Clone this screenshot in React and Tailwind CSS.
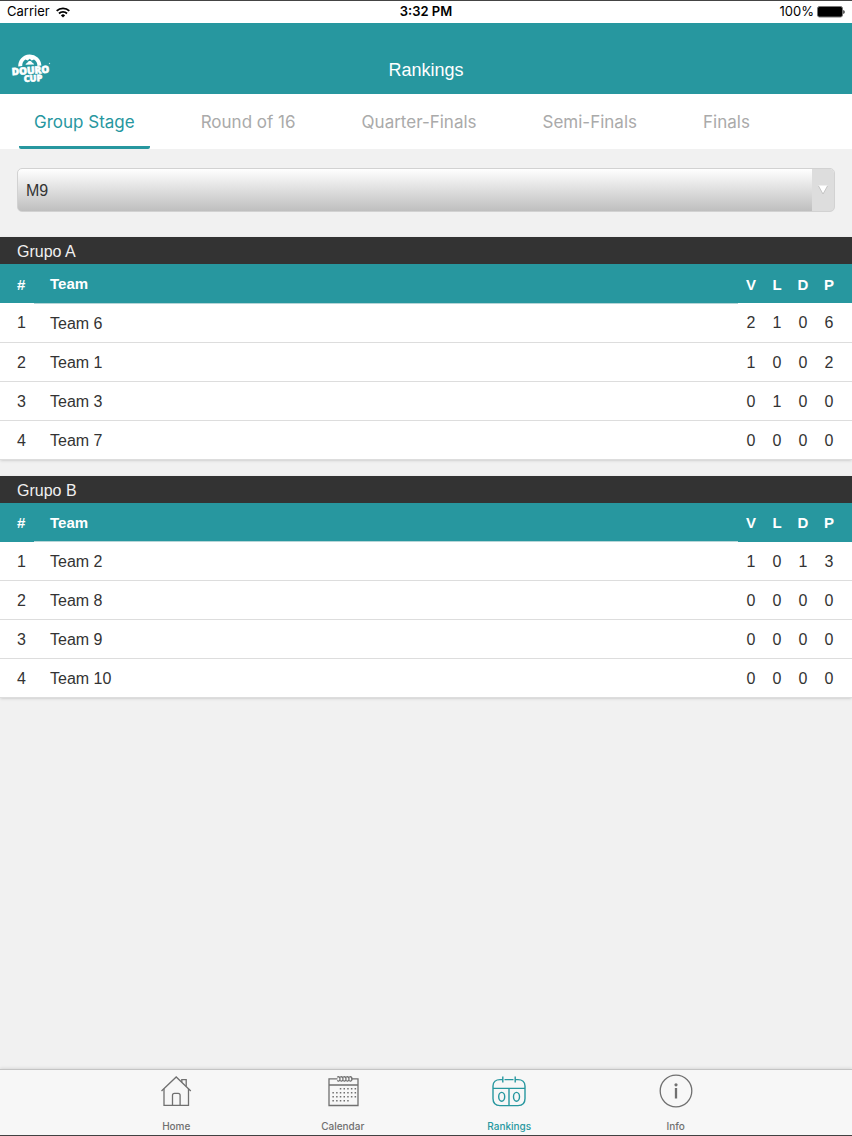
import { useState } from 'react'

const rondas = ['Group Stage', 'Round of 16', 'Quarter-Finals', 'Semi-Finals', 'Finals']

const grupos = [
  {
    nombre: 'Grupo A',
    equipos: [
      { nombre: 'Team 6', v: 2, l: 1, d: 0, p: 6 },
      { nombre: 'Team 1', v: 1, l: 0, d: 0, p: 2 },
      { nombre: 'Team 3', v: 0, l: 1, d: 0, p: 0 },
      { nombre: 'Team 7', v: 0, l: 0, d: 0, p: 0 }
    ]
  },
  {
    nombre: 'Grupo B',
    equipos: [
      { nombre: 'Team 2',  v: 1, l: 0, d: 1, p: 3 },
      { nombre: 'Team 8',  v: 0, l: 0, d: 0, p: 0 },
      { nombre: 'Team 9',  v: 0, l: 0, d: 0, p: 0 },
      { nombre: 'Team 10', v: 0, l: 0, d: 0, p: 0 }
    ]
  }
]

const WifiIcon = () => (
  <svg width="14" height="11" viewBox="0 0 14 11" fill="none" stroke="#000" strokeWidth="1.9">
    <path d="M0.7 3.9a9 9 0 0 1 12.6 0" />
    <path d="M3 6.5a5.7 5.7 0 0 1 8 0" />
    <path d="M7 10.6 4.9 8.4a3 3 0 0 1 4.2 0z" fill="#000" stroke="none" />
  </svg>
)

const BatteryIcon = () => (
  <svg width="28" height="12" viewBox="0 0 28 12">
    <rect x="0.5" y="0.5" width="25" height="10.5" rx="2" fill="#000" stroke="#777" />
    <path d="M26.4 4v4c1.6-.6 1.6-3.4 0-4z" fill="#000" />
  </svg>
)

const Logo = () => (
  <svg width="44" height="34" viewBox="-2 0 44 34" fill="#fff" aria-label="Douro Cup">
    <path d="M6.2 14.5a11.6 11.6 0 0 1 23.2-1l-4 .5a7.6 7.6 0 0 0-3.4-6.500l-2.3 1-2-1.7-2 1.7-2.3-1a7.6 7.6 0 0 0-3.2 6.4z" />
    <path d="M13.5 12.8c.5-1.600 1.8-1.500 2.200-2.500.8-1.600 3.400-1.600 4.200 0 .6 1 2 .7 2.300 2.300z" />
    <g
      fontFamily="'Open Sans', 'Liberation Sans', sans-serif"
      fontWeight="800"
      stroke="#fff"
      strokeWidth="0.6"
      textAnchor="middle"
    >
      <text x="18.5" y="22" fontSize="10" transform="rotate(-4 18.5 18)">DOURO</text>
      <text x="21" y="29.5" fontSize="9" transform="rotate(-3 21 26)">CUP</text>
    </g>
    <circle cx="37.5" cy="11.5" r="0.7" opacity="0.7" />
  </svg>
)

const HomeIcon = () => (
  <svg width="34" height="34" viewBox="0 0 34 34" fill="none" stroke="currentColor" strokeWidth="1.3">
    <path d="M2.5 17 17.2 3l14.6 14" />
    <path d="M5 14.8v16.6h24.5V14.8" />
    <path d="M22.8 8.200V5.600h4.400v6.600" />
    <path d="M13.5 31V21.300a2 2 0 0 1 2-2h3.600a2 2 0 0 1 2 2V31" />
  </svg>
)

const CalendarIcon = () => (
  <svg width="34" height="34" viewBox="0 0 34 34" fill="none" stroke="currentColor" strokeWidth="1.3">
    <path d="M11.500 4.800H3v26.700h29V4.800h-7M3 11h29" />
    {[12.5, 15.5, 18.5, 21.5, 24.5].map(x => (
      <path key={x} d={`M${x - 1.2} 3.4c1-1.3 2.7-.5 2.7 1.600s-1.700 2.700-2.700 1.400`} />
    ))}
    <g strokeWidth="1.4" strokeDasharray="1.5 2.2">
      <path d="M13.800 14.800h16.500M6.400 18.800h23.900M6.400 22.800h23.900M6.400 26.800h16.500" />
    </g>
  </svg>
)

const RankingsIcon = () => (
  <svg width="34" height="34" viewBox="0 0 34 34" fill="none" stroke="currentColor" strokeWidth="1.4">
    <path d="M8 5.600c-4 0-7 2.500-7 6.500v12.500c0 4.500 2.500 7 7 7h18c4.500 0 7-2.500 7-7V12.100c0-4-3-6.500-7-6.500M12.500 5.600h9" />
    <path d="M8 5.600h3M23 5.600h3M10.800 2.500v6M23.200 2.500v6M1 14.400h32M17 14.400v17" />
    <ellipse cx="9.700" cy="22.800" rx="3" ry="4.400" />
    <ellipse cx="24.500" cy="22.800" rx="3" ry="4.400" />
  </svg>
)

const InfoIcon = () => (
  <svg width="34" height="34" viewBox="0 0 34 34" fill="none" stroke="currentColor" strokeWidth="1.3">
    <circle cx="17" cy="17" r="15.8" />
    <path d="M17 14v10.500" strokeWidth="2.3" />
    <circle cx="17" cy="10.800" r="1.600" fill="currentColor" stroke="none" />
  </svg>
)

const menu = [
  { label: 'Home',     Icon: HomeIcon },
  { label: 'Calendar', Icon: CalendarIcon },
  { label: 'Rankings', Icon: RankingsIcon },
  { label: 'Info',     Icon: InfoIcon }
]

const TablaGrupo = ({ grupo }) => (
  <section className="mb-4 bg-white shadow-sm">
    <h2 className="h-[27px] px-[17px] bg-[#333333] text-[#f0f0f0] text-[16px] leading-[29px]">
      {grupo.nombre}
    </h2>
    <table className="w-full table-fixed text-[16px] leading-5 text-[#333333]">
      <colgroup>
        <col className="w-[34px]" />
        <col />
        <col className="w-[26px]" />
        <col className="w-[26px]" />
        <col className="w-[26px]" />
        <col className="w-[36px]" />
      </colgroup>
      <thead className="bg-[#27979f] text-white text-[15px]">
        <tr className="h-[39px]">
          <th className="pt-[2px] pl-[17px] text-left">#</th>
          <th className="pt-[2px] pl-4 text-left border-b border-[#b5d5d7]">Team</th>
          <th className="pt-[2px]">V</th>
          <th className="pt-[2px]">L</th>
          <th className="pt-[2px]">D</th>
          <th className="pt-[2px] pr-[10px]">P</th>
        </tr>
      </thead>
      <tbody>
        {grupo.equipos.map((e, i) => (
          <tr key={e.nombre} className="h-[39px] border-b border-[#dddddd]">
            <td className="pt-[2px] pl-[17px]">{i + 1}</td>
            <td className="pt-[2px] pl-4">{e.nombre}</td>
            <td className="pt-[2px] text-center">{e.v}</td>
            <td className="pt-[2px] text-center">{e.l}</td>
            <td className="pt-[2px] text-center">{e.d}</td>
            <td className="pt-[2px] pr-[10px] text-center">{e.p}</td>
          </tr>
        ))}
      </tbody>
    </table>
  </section>
)

const App = () => {
  const [ronda, setRonda] = useState('Group Stage')
  const [categoria, setCategoria] = useState('M9')
  const [pagina, setPagina] = useState('Rankings')

  return (
    <div className="min-h-screen flex flex-col bg-[#f1f1f1] border-y border-[#444444]
                    font-['Liberation_Sans',Arial,sans-serif]">

      {/* Barra de estado */}
      <div className="h-[22px] px-[7px] grid grid-cols-3 items-center bg-white text-black
                      text-[13px] font-['Inter',sans-serif]">
        <div className="flex items-center gap-[6px]">
          Carrier <WifiIcon />
        </div>
        <div className="text-center font-semibold">3:32 PM</div>
        <div className="flex items-center justify-end gap-[3px]">
          100% <BatteryIcon />
        </div>
      </div>

      {/* Cabecera */}
      <header className="h-[71px] px-[10px] pb-2 grid grid-cols-3 items-end bg-[#27979f]">
        <Logo />
        <h1 className="text-center text-[18px] leading-8 text-white">
          Rankings
        </h1>
      </header>

      {/* Rondas */}
      <nav className="h-[55px] pl-[19px] flex gap-9 bg-white
                      text-[17px] font-['Inter',sans-serif]">
        {rondas.map(r => (
          <button
            key={r}
            onClick={() => setRonda(r)}
            className={`px-[15px] pt-[6px] whitespace-nowrap border-b-3 rounded-xs ${
              r === ronda
                ? 'text-[#27979f] border-[#27979f]'
                : 'text-[#aaaaaa] border-transparent'
            }`}
          >
            {r}
          </button>
        ))}
      </nav>

      <main className="flex-1">
        {/* Categoría */}
        <div className="relative mx-[17px] mt-[19px] mb-[25px]">
          <select
            aria-label="Categoría"
            value={categoria}
            onChange={e => setCategoria(e.target.value)}
            className="block w-full h-11 pt-[2px] pl-2 pr-8 appearance-none rounded-[5px]
                       border border-[#d2d2d2] bg-linear-to-b from-white to-[#bfbfbf]
                       text-[16px] text-[#333333]"
          >
            <option>M9</option>
          </select>
          <span className="absolute inset-y-px right-px w-[22px] rounded-r bg-[#dddddd]
                           flex items-center justify-center pointer-events-none">
            <svg width="12" height="12" viewBox="0 0 12 12">
              <path d="M1.500 1.500h9L6 10z" fill="#fff" />
              <path d="M1.500 2 6 10l4.500-8" fill="none" stroke="#bbb" strokeWidth="0.8" />
            </svg>
          </span>
        </div>

        {grupos.map(g => <TablaGrupo key={g.nombre} grupo={g} />)}
      </main>

      {/* Menú inferior */}
      <nav className="h-[66px] px-[93px] flex border-t border-[#c4c4c4] bg-[#f7f7f7]
                      shadow-[0_-1px_3px_rgba(0,0,0,0.1)]
                      text-[10px] leading-3 font-['Inter',sans-serif] font-medium">
        {menu.map(({ label, Icon }) => (
          <button
            key={label}
            onClick={() => setPagina(label)}
            className={`flex-1 pb-[3px] pt-1 flex flex-col items-center justify-between ${
              label === pagina ? 'text-[#27979f]' : 'text-[#707070]'
            }`}
          >
            <Icon />
            <span>{label}</span>
          </button>
        ))}
      </nav>
    </div>
  )
}

export default App
